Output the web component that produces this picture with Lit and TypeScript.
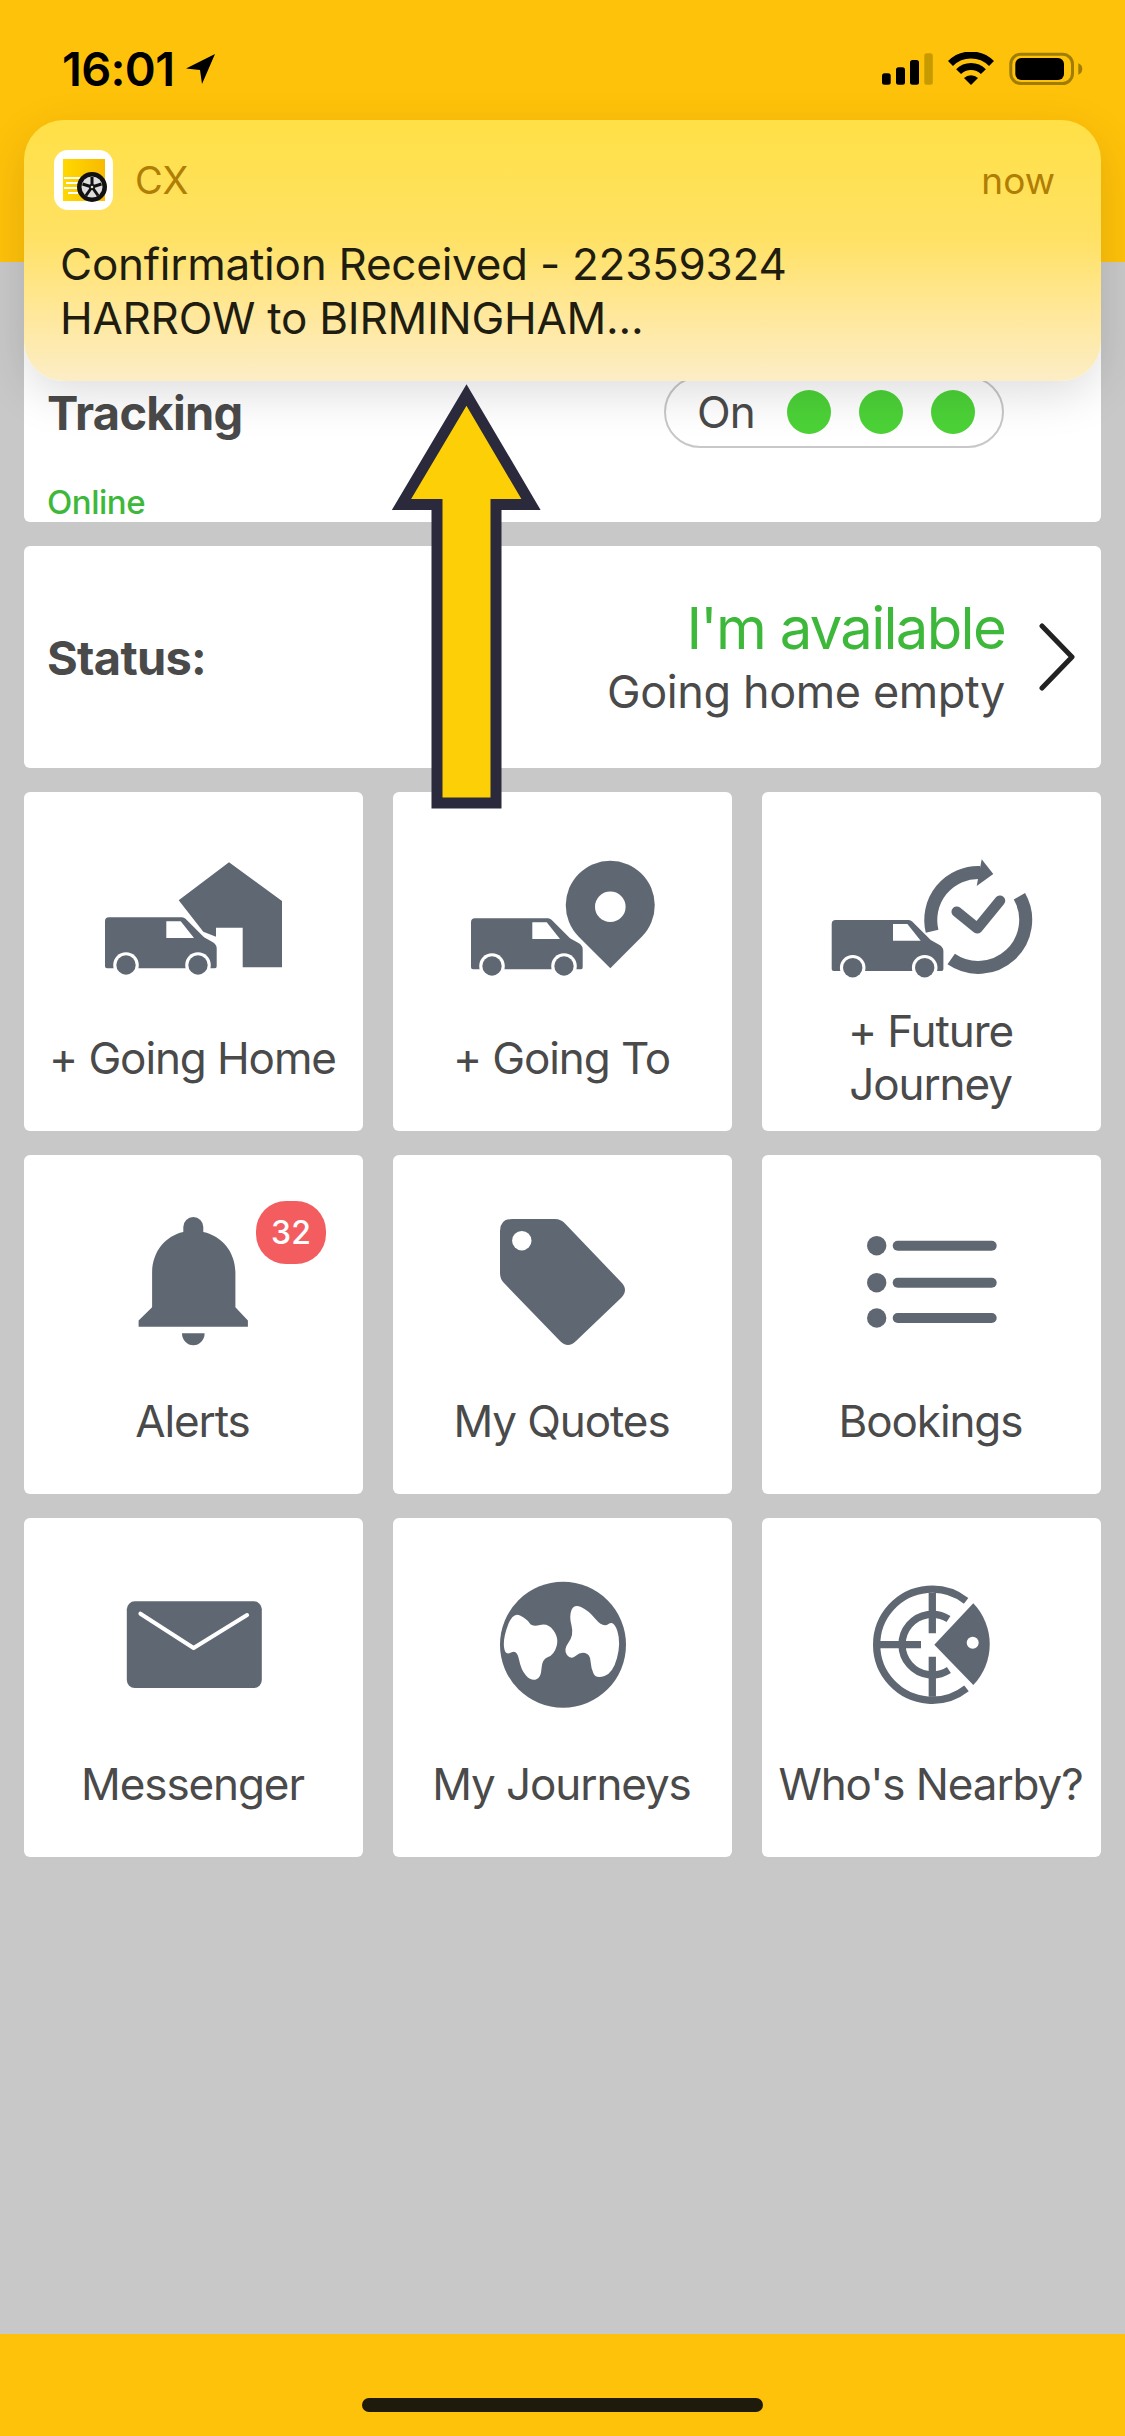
import { LitElement, html, css, svg } from 'lit'
import { customElement } from 'lit/decorators.js'

// tile icons are drawn in tile-local pixels, viewBox 339x213
const van = (x: number, y: number) => svg`
  <g transform="translate(${x} ${y})">
    <path d="M0 4 Q0 0 4 0 H77 Q79 0 80.5 1.5 L99 20 L107 24.5 Q111.7 27 111.7 31 V49 Q111.7 51 110 51 H2 Q0 51 0 49 Z"/>
    <path d="M61.3 4 H75.7 L89 20.7 H61.3 Z" fill="#fff"/>
    <circle cx="21" cy="47.7" r="12.8" fill="#fff"/>
    <circle cx="93" cy="47.7" r="12.8" fill="#fff"/>
    <circle cx="21" cy="47.7" r="9.7"/>
    <circle cx="93" cy="47.7" r="9.7"/>
  </g>`

// rounds off a closed outline through the midpoints of its sides
const blob = (pts: number[][]) => {
  const mid = (a: number[], b: number[]) => `${(a[0] + b[0]) / 2} ${(a[1] + b[1]) / 2}`
  let d = `M${mid(pts[pts.length - 1], pts[0])}`
  pts.forEach((p, i) => {
    d += ` Q${p[0]} ${p[1]} ${mid(p, pts[(i + 1) % pts.length])}`
  })
  return d + ' Z'
}

const landLeft = [[120, 94], [134, 101], [139, 109], [155, 105], [166, 120], [161, 137], [149, 141], [148, 160], [138, 163], [128, 152], [124, 131], [112, 138], [110, 120]]
const landRight = [[181, 86], [195, 92], [210, 110], [221, 102], [228, 125], [220, 155], [203, 161], [198, 150], [197, 136], [187, 134], [178, 142], [170, 132], [181, 117], [176, 98]]

const icons = {
  home: svg`
    <path d="M205 70.3 L258 109 V175.3 H218.7 V135.7 H192 V144.7 L179.3 139.7 L154.7 108.3 Z"/>
    ${van(81, 125.3)}`,
  goingTo: svg`
    ${van(78, 126.3)}
    <path d="M217.3 176.3 L185.5 144.5 A44.5 44.5 0 1 1 249 144.5 Z"/>
    <circle cx="217.3" cy="114.7" r="15.3" fill="#fff"/>`,
  future: svg`
    ${van(69.7, 128)}
    <g fill="none" stroke="#5f6872" stroke-width="13">
      <path d="M170.1 139.2 A47.5 47.5 0 0 1 218 80.5"/>
      <path d="M257.4 104.3 A47.5 47.5 0 0 1 189.2 167"/>
    </g>
    <path d="M219.7 67.3 L231.3 82 L214.7 94 Z"/>
    <path d="M194.7 119.7 L215.3 136.3 L238 108.7" fill="none" stroke="#5f6872" stroke-width="10.5" stroke-linecap="round" stroke-linejoin="round"/>`,
  bell: svg`
    <path d="M159.3 77 V72 A10 10 0 0 1 179.3 72 V77 C198 81 211.4 97 211.4 118 V152.3 L223.9 165.5 V171.7 H114.6 V165.5 L128.1 152.3 V118 C128.1 97 141 81 159.3 77 Z"/>
    <path d="M158 178.3 H180.6 A11.3 12 0 0 1 158 178.3 Z"/>`,
  tag: svg`
    <path d="M107 76 Q107 64 119 64 H162 Q168 64 172 68.5 L228 127 Q236 135 228 143 L183 186 Q175 194 167 186 L111 128 Q107 124 107 118 Z"/>
    <circle cx="128.8" cy="85.7" r="9.7" fill="#fff"/>`,
  list: svg`
    ${[90.7, 127.7, 163].map(y => svg`
      <circle cx="114.7" cy="${y}" r="9.7"/>
      <rect x="130.7" y="${y - 5}" width="104" height="10" rx="5"/>`)}`,
  mail: svg`
    <rect x="102.8" y="83.3" width="135" height="86.7" rx="8"/>
    <path d="M116.4 95.7 L169.6 130 L223.1 97" fill="none" stroke="#fff" stroke-width="4" stroke-linecap="round" stroke-linejoin="round"/>`,
  globe: svg`
    <circle cx="170" cy="126.8" r="63"/>
    <path d="${blob(landLeft)}" fill="#fff"/>
    <path d="${blob(landRight)}" fill="#fff"/>`,
  radar: svg`
    <g fill="none" stroke="#5f6872" stroke-width="7.3">
      <path d="M204.1 82.8 A55.5 55.5 0 1 0 204.5 170.3"/>
      <path d="M186.5 101 A30.3 30.3 0 1 0 186.9 152"/>
      <path d="M170.3 75 V115.3 M170.3 138.7 V178.7 M118 126.7 H159"/>
    </g>
    <path d="M172.3 126.7 L211.3 85.3 A59 59 0 0 1 211.3 167 Z"/>
    <circle cx="210.7" cy="124.7" r="6" fill="#fff"/>`
}

const tiles = [
  { icon: icons.home, label: ['+ Going Home'] },
  { icon: icons.goingTo, label: ['+ Going To'] },
  { icon: icons.future, label: ['+ Future', 'Journey'] },
  { icon: icons.bell, label: ['Alerts'], badge: '32' },
  { icon: icons.tag, label: ['My Quotes'] },
  { icon: icons.list, label: ['Bookings'] },
  { icon: icons.mail, label: ['Messenger'] },
  { icon: icons.globe, label: ['My Journeys'] },
  { icon: icons.radar, label: ["Who's Nearby?"] }
]

@customElement('app-root')
export class AppRoot extends LitElement {
  static styles = css`
    :host {
      display: flex;
      flex-direction: column;
      position: relative;
      width: 1125px;
      height: 2436px;
      background: #c8c8c8;
      font-family: Inter, "Liberation Sans", sans-serif;
      color: #4a4a4a;
      overflow: hidden;
    }

    .top {
      box-sizing: border-box;
      height: 262px;
      flex: none;
      background: #ffc20a;
      padding: 52px 42px 0 62px;
      display: flex;
      justify-content: space-between;
      align-items: flex-start;
    }
    .time {
      display: flex;
      align-items: center;
      gap: 12px;
      font-size: 47px;
      line-height: 34px;
      font-weight: 600;
      letter-spacing: -0.7px;
      color: #000;
    }

    main {
      flex: 1;
      display: flex;
      flex-direction: column;
      gap: 24px;
      padding: 24px 24px 0;
    }
    .card {
      background: #fff;
      border-radius: 6px;
    }

    .tracking {
      height: 236px;
      box-sizing: border-box;
      padding: 90px 97px 0 23px;
    }
    .tracking-row {
      display: flex;
      justify-content: space-between;
      align-items: center;
    }
    .heading {
      font-size: 47px;
      font-weight: 700;
      letter-spacing: -0.7px;
    }
    .pill {
      box-sizing: border-box;
      width: 340px;
      height: 72px;
      border: 2px solid #c8c8c8;
      border-radius: 36px;
      display: flex;
      align-items: center;
      gap: 32px;
      padding-left: 31px;
      font-size: 44px;
      letter-spacing: -1px;
    }
    .dots {
      display: flex;
      gap: 28px;
    }
    .dot {
      width: 44px;
      height: 44px;
      border-radius: 50%;
      background: #4cd237;
    }
    .online {
      margin-top: 34px;
      font-size: 33px;
      line-height: 40px;
      font-weight: 500;
      letter-spacing: -0.5px;
      color: #3db83a;
    }

    .status {
      height: 222px;
      box-sizing: border-box;
      padding: 0 25px 0 23px;
      display: flex;
      align-items: center;
    }
    .status-text {
      margin-left: auto;
      margin-right: 33px;
      text-align: right;
    }
    .available {
      font-size: 58px;
      line-height: 66px;
      letter-spacing: -1.7px;
      color: #3db83a;
    }
    .going {
      margin-top: 3px;
      font-size: 45px;
      line-height: 56px;
      letter-spacing: -0.4px;
    }

    .grid {
      display: grid;
      grid-template-columns: repeat(3, 339px);
      gap: 24px 30px;
    }
    .tile {
      position: relative;
      height: 339px;
    }
    .tile svg {
      display: block;
      width: 339px;
      height: 213px;
      fill: #5f6872;
    }
    .label {
      height: 106px;
      padding-right: 2px;
      display: flex;
      flex-direction: column;
      align-items: center;
      justify-content: center;
      font-size: 44px;
      line-height: 53px;
      letter-spacing: -1.1px;
      white-space: nowrap;
    }
    .badge {
      position: absolute;
      left: 232px;
      top: 46px;
      width: 70px;
      height: 63px;
      border-radius: 30px;
      background: #f45d60;
      color: #fff;
      font-size: 32px;
      font-weight: 500;
      display: flex;
      align-items: center;
      justify-content: center;
    }

    .bottom {
      flex: none;
      height: 102px;
      background: #ffc20a;
      display: flex;
      justify-content: center;
      align-items: flex-end;
      padding-bottom: 24px;
      box-sizing: border-box;
    }
    .home-bar {
      width: 401px;
      height: 14px;
      border-radius: 7px;
      background: #1e1a0c;
    }

    .notice {
      position: absolute;
      left: 24px;
      top: 120px;
      width: 1077px;
      height: 261px;
      box-sizing: border-box;
      border-radius: 40px;
      padding: 30px 46px 0 30px;
      background: linear-gradient(#ffe046 0%, #ffe164 45%, #ffe89c 75%, #fcedc6 100%);
      box-shadow: 0 14px 46px rgba(0, 0, 0, 0.13);
      color: #1f1c10;
    }
    .notice-head {
      display: flex;
      align-items: center;
      gap: 22px;
      color: #b07d05;
      font-size: 38px;
    }
    .now {
      margin-left: auto;
      font-size: 37px;
    }
    .notice-body {
      margin: 27px 0 0 6px;
      font-size: 44px;
      line-height: 54px;
      letter-spacing: -0.25px;
    }
    .arrow {
      position: absolute;
      left: 380px;
      top: 370px;
    }
  `

  render () {
    return html`
      <div class="top">
        <div class="time">
          16:01
          <svg width="29" height="30" viewBox="188 54 29 30"><path d="M217 54 L188 68.5 L202 70 L204 84 Z"/></svg>
        </div>
        <svg width="201" height="34" viewBox="882 52 201 34">
          <rect x="882" y="73.3" width="8.7" height="11.4" rx="2.5"/>
          <rect x="896" y="67.3" width="9" height="17.4" rx="2.5"/>
          <rect x="910" y="60" width="9" height="24.7" rx="2.5"/>
          <rect x="924.3" y="53.3" width="8.5" height="31.4" rx="2.5" fill="#c79a00"/>
          <g fill="none" stroke="#000" stroke-width="7">
            <path d="M950.5 63.5 A29 29 0 0 1 991.5 63.5"/>
            <path d="M958.6 71.6 A17.5 17.5 0 0 1 983.4 71.6"/>
          </g>
          <path d="M971 85 L964 78 A10 10 0 0 1 978 78 Z"/>
          <rect x="1010.8" y="54.2" width="61.7" height="29.3" rx="10" fill="none" stroke="#a07c00" stroke-width="3"/>
          <rect x="1015.3" y="58" width="48.7" height="22" rx="6"/>
          <path d="M1078.3 63.3 Q1082.3 65 1082.3 69 Q1082.3 73 1078.3 74.7 Z" fill="#a07c00"/>
        </svg>
      </div>

      <main>
        <div class="card tracking">
          <div class="tracking-row">
            <div class="heading">Tracking</div>
            <div class="pill">
              On
              <div class="dots"><div class="dot"></div><div class="dot"></div><div class="dot"></div></div>
            </div>
          </div>
          <div class="online">Online</div>
        </div>

        <div class="card status">
          <div class="heading">Status:</div>
          <div class="status-text">
            <div class="available">I'm available</div>
            <div class="going">Going home empty</div>
          </div>
          <svg width="38" height="68" viewBox="0 0 38 68">
            <path d="M4 3 L34 34 L4 65" fill="none" stroke="#222" stroke-width="5" stroke-linecap="round" stroke-linejoin="round"/>
          </svg>
        </div>

        <div class="grid">
          ${tiles.map(t => html`
            <div class="card tile">
              <svg viewBox="0 0 339 213">${t.icon}</svg>
              <div class="label">${t.label.map(l => html`<span>${l}</span>`)}</div>
              ${t.badge ? html`<div class="badge">${t.badge}</div>` : ''}
            </div>
          `)}
        </div>
      </main>

      <div class="bottom"><div class="home-bar"></div></div>

      <div class="notice">
        <div class="notice-head">
          <svg width="59" height="60" viewBox="0 0 59 60">
            <defs>
              <linearGradient id="appFill" x1="0" x2="1" y1="0" y2="0">
                <stop offset="0" stop-color="#ffd800"/>
                <stop offset="1" stop-color="#f8ba00"/>
              </linearGradient>
            </defs>
            <rect width="59" height="60" rx="14" fill="#fff"/>
            <rect x="9" y="9" width="42" height="42" fill="url(#appFill)"/>
            <path d="M10 28 H26 M12 33 H24 M10 38 H24 M14 43 H24" stroke="#fff" stroke-width="2"/>
            <circle cx="38" cy="37" r="15" fill="#111"/>
            <circle cx="38" cy="37" r="10.5" fill="#ddd"/>
            <g stroke="#111" stroke-width="3">
              <path d="M38 37 V27 M38 37 L47.5 34 M38 37 L44 45.5 M38 37 L32 45.5 M38 37 L28.5 34"/>
            </g>
            <circle cx="38" cy="37" r="3" fill="#111"/>
            <circle cx="38" cy="37" r="1.3" fill="#ddd"/>
          </svg>
          <span>CX</span>
          <span class="now">now</span>
        </div>
        <div class="notice-body">
          Confirmation Received - 22359324<br />HARROW to BIRMINGHAM...
        </div>
      </div>

      <svg class="arrow" width="172" height="450" viewBox="380 370 172 450">
        <path d="M466.5 395 L531 504.5 H496 V803 H437 V504.5 H401.5 Z" fill="#fdcf06" stroke="#2a2a3c" stroke-width="11"/>
      </svg>
    `
  }
}
